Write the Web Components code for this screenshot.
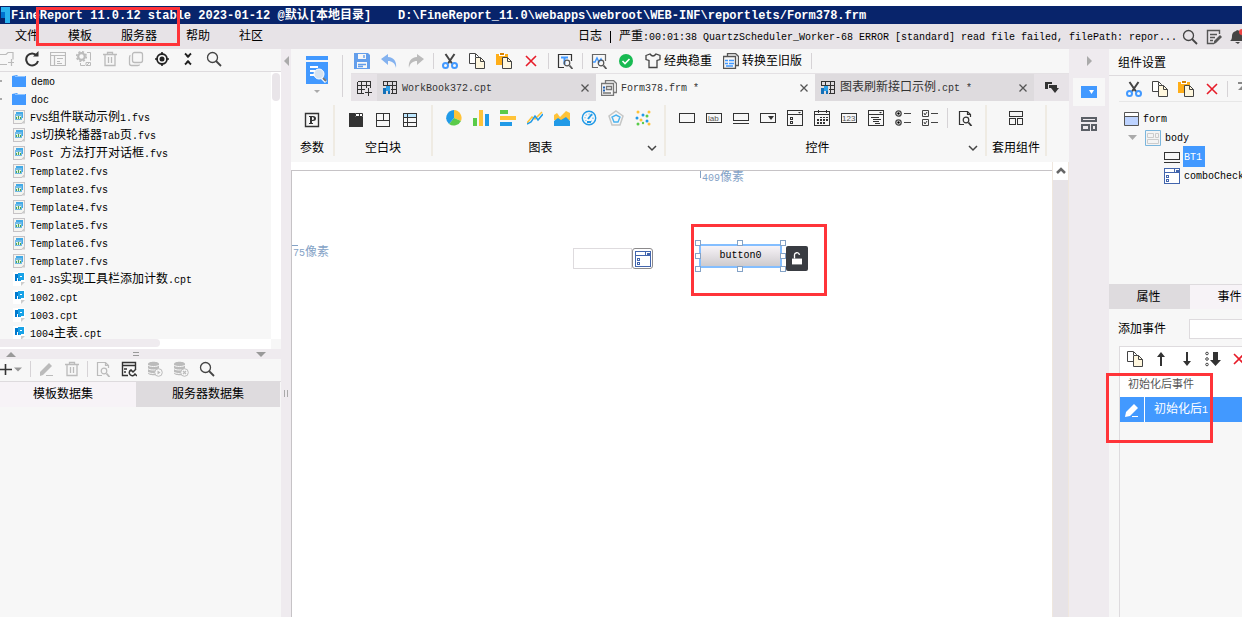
<!DOCTYPE html>
<html lang="zh-CN">
<head>
<meta charset="utf-8">
<title>FineReport</title>
<style>
html,body{margin:0;height:100%;overflow:hidden;background:#fff}
</style>
</head>
<body>
<report-designer></report-designer>
<script>
const BASE = `
*{box-sizing:border-box}
:host{display:block;box-sizing:border-box;font:10px/18px "Liberation Mono","Noto Sans CJK SC",monospace;color:#000;white-space:pre}
.z,span:not(.z)::before{font-size:12px;line-height:18px;font-family:"Noto Sans CJK SC",sans-serif}
span:not(.z)::before{content:""}
button,input{font:inherit;color:inherit;margin:0;padding:0;border:0;background:none;display:block;white-space:pre}
a{color:inherit;text-decoration:none}
svg{display:block;flex:none}
.sep{flex:none;width:1px;background:#d6d3d6}
`;
/* Chinese runs are set larger than the monospaced Latin around them. */
const mix = html => html.replace(/>([^<]+)/g, (m, t) => '>' + t.replace(/[\u4e00-\u9fff]+/g, '<span class="z">$&</span>'))
                        .replace(/>\s*\n\s*/g, '>').replace(/\n\s*</g, '<');
function define(name, css, html) {
  customElements.define(name, class extends HTMLElement {
    constructor() {
      super();
      this.attachShadow({ mode: 'open' });
    }
    connectedCallback() {
      if (this.shadowRoot.firstChild) return;
      const t = document.createElement('template');
      t.innerHTML = '<style>' + BASE + css + '</style>' + mix(typeof html === 'function' ? html(this) : html);
      this.shadowRoot.append(t.content.cloneNode(true));
    }
  });
}

const C = 'shape-rendering="crispEdges"';
const L = (d, c = '#333', w = 1, x = '') => `<path d="${d}" fill="none" stroke="${c}" stroke-width="${w}" ${x}/>`;
const F = (d, c = '#333', x = '') => `<path d="${d}" fill="${c}" ${x}/>`;
const lens = (c, x = 8, y = 9, r = 3.5) => `<circle cx="${x + 2}" cy="${y}" r="${r}" fill="none" stroke="${c}" stroke-width="1.2"/>` + L(`M${x + 4.5} ${y + 2.5}l3 3.5`, c, 1.8);
const dbase = F('M1 3c0-3 11-3 11 0v9c0 3-11 3-11 0z', '#bbb') + L('M1 4c1 2 10 2 11 0M1 7.500c1 2 10 2 11 0M1 11c1 2 10 2 11 0', '#f7f7f7') + '<circle cx="11.500" cy="11.500" r="3.800" fill="#f7f7f7" stroke="#bbb"/>';
const sheet = L('M1.500 1.500h13v12h-13zM1.500 5.500h13M1.500 9.500h13M5.500 1.500v12M10.500 1.500v12', '#333', 1, C);
const ICONS = {
  newfolder: L('M0 3.500h8l2-2h5v7M0 13.500h9M13.500 8v7M10 11.500h7', '#bbb', 1.2),
  refresh: L('M12.800 4.600A6 6 0 1 0 14 10', '#333', 2) + F('M9 5.500h5.500V0z'),
  listbox: L('M.5 1.500h15v13h-15zM.5 4.500h15M4.500 4v10M7 7.500h6M7 10.500h3M7 12.500h5', '#bbb', 1.2),
  gears: '<circle cx="5.500" cy="5.500" r="3.300" fill="none" stroke="#bbb" stroke-width="2.200" /><circle cx="5.500" cy="5.500" r="4.800" fill="none" stroke="#bbb" stroke-width="1.600" stroke-dasharray="2 1.770"/>' + L('M11 1.500h3.500v8M4.500 12v2.500H9M10 11.500h4.500v3H10zM11 14l3-3', '#bbb'),
  trash: L('M1 3.500h14M5.500 3V1.500h5V3M3 4v10.500h10V4M6.500 6v6M9.500 6v6', '#bbb', 1.3),
  layers: '<rect x="4.500" y="1.500" width="10" height="10" rx="2" fill="none" stroke="#bbb" stroke-width="1.300"/>' + L('M2.500 4.500q-1 0-1 2v6q0 2 2 2h6q2 0 2-1', '#bbb', 1.3),
  locate: '<circle cx="8" cy="8" r="5" fill="none" stroke="#222" stroke-width="1.800"/><circle cx="8" cy="8" r="2.500" fill="#222"/>' + L('M8 1v3M8 12v3M1 8h3M12 8h3', '#222', 1.6),
  collapse: L('M5 2.500l3 3 3-3M5 13.500l3-3 3 3', '#222', 1.8) + F('M6 5h4l-2 2zM6 11h4l-2-2z', '#222'),
  search: '<circle cx="6.500" cy="6.500" r="5" fill="none" stroke="#444" stroke-width="1.300"/>' + L('M10 10l5 5', '#444', 1.8),
  folder: F('M1 3l5-1 1 1h8v11H1z', '#4299ff') + L('M4 3.500h10', '#8fc4ff'),
  fvs: `<g ${C}><path d="M1.500 1.500h11v10l-3 3h-8z" fill="#f4f4f0" stroke="#c6c3c6"/><path d="M4 3h7v6h-7z" fill="#42aae7"/><path d="M3 5h7v6H3z" fill="#73bbe8"/><path d="M4 7h5v3H4z" fill="#e7f3de"/><path d="M4 8h1v2H4zM6 7h1v3H6zM8 8h1v2H8z" fill="#52a552"/></g>` + F('M9 14.500l4-4v4z', '#ccc'),
  cpt: `<path d="M1 1h12v10l-4 4H1z" fill="#fff"/><g ${C}><path d="M3 3h4v7H3z" fill="#0079ce"/><path d="M6 2h6v7H9v1H7V8H6z" fill="#18a2e7"/><path d="M5 7h1v3H5zM8 5h2v1H8z" fill="#fff"/></g>` + F('M9 15v-4h4z', '#ccc'),
  plus: L('M0 8.500h12M5.500 3v11', '#333', 1.6) + F('M14 6.500h8l-4 4z', '#999'),
  pencil: F('M2 11L11 2l3 3-9 9-3 1z', '#bbb') + L('M8 14.500h7', '#bbb'),
  pencilw: F('M2 10L10 2l4 4-8 8-5 1z', '#fff') + L('M8 14.500h6', '#fff'),
  docsearch: L('M7 14.500H2.500v-13h8l3 3V7M10.500 1.500v3h3', '#bbb', 1.2) + lens('#bbb', 7, 10, 2.8),
  docsearchd: L('M7 14.500H2.500v-13h8l3 3V7M10.500 1.500v3h3', '#333', 1.2) + lens('#333', 7, 10, 2.8),
  dataedit: L('M14.500 8V1.500h-13v13H7M1.500 4.500h13M3 8h3M3 11h2', '#333', 1.4) + L('M15 8l-3 3-2-2a3 3 0 1 0 4 4l2 2', '#333', 1.5),
  dbplay: dbase + F('M10.500 9.500l3 2-3 2z', '#bbb'),
  dbx: dbase + L('M10 10l3 3M13 10l-3 3', '#bbb', 1.2),
  save: F('M0 0h14l2 2v14H0z', '#639eeb') + F('M4 1h8v5H4zM3 9h10v6H3z', '#f7f7f7') + L('M10 2v3M4 11.500h8M4 13.500h5', '#639eeb', 1.4),
  undo: F('M0 6l7-5v3c6 0 9 5 8 11-1-5-4-7-8-7v4z', '#84b2ef'),
  redo: F('M16 6L9 1v3C3 4 0 9 1 15c1-5 4-7 8-7v4z', '#bbb'),
  cut: L('M3.500 1L10 10.500M12.500 1L6 10.500', '#444', 2) + '<g fill="none" stroke="#4299ff" stroke-width="2"><circle cx="3.500" cy="12.500" r="2.500"/><circle cx="12.500" cy="12.500" r="2.500"/></g>',
  copy: '<path d="M.5 .5h6l3 3v7h-9z" fill="#fff" stroke="#444"/><path d="M6.500 4.500h5l4 4v7h-9z" fill="#fff7de" stroke="#444"/>' + L('M11.500 4.500v4h4M6.500 1v3', '#444'),
  paste: F('M0 1h12v11H0z', '#ffae18') + F('M3 0h6v3H3z', '#fff') + F('M4 0h4v2H4z', '#d98200') + '<path d="M6.500 4.500h5l4 4v7h-9z" fill="#fff7de" stroke="#444"/>' + L('M11.500 4.500v4h4', '#444'),
  remove: L('M3 3l10 10M13 3L3 13', '#e71c29', 1.6),
  tsearch: L('M7 14.500H1.500v-13h13V8', '#333', 1.2) + L('M4 4.500h7M7.500 4.500v7', '#4299ff', 2) + lens('#555', 8, 10, 2.8),
  wave: L('M7 14.500H1.500v-13h13V8', '#666', 1.2) + L('M2 9h2l2-4 2 4 2-3 1 2', '#4299ff', 1.5) + lens('#555', 8, 10, 2.8),
  ok: '<circle cx="8" cy="8" r="7" fill="#18ba52"/>' + L('M4.500 8l2.500 2.500L11.500 6', '#fff', 1.6),
  shirt: L('M1 2.500L5 1q3 4 6 0l4 1.500v4l-3 1v7H4v-7l-3-1z', '#444', 1.3),
  oldver: L('M4.500 3V.5h8l3 3v9H13M.5 3.500h12v12H.5z', '#555', 1.3) + L('M2 7.500h3M6 7.500h5M2 10.500h3M6 10.500h5M3 13h7', '#4299ff', 1.6),
  form: L('M4.500 3V.5h8l3 3v9H13M.5 3.500h12v12H.5zM5.500 6.500h5v3h-5zM2 13h8', '#777', 1.3) + L('M2 7.500h2M2 10.500h2', '#2464b5', 2),
  addsheet: L('M1.500 1.500h13V8M1.500 1.500v12H8M1.500 5.500h13M1.500 9.500h7M5.500 1.500v12M10.500 1.500v6M12.500 8v8M9 12.500h7', '#333', 1, C),
  sheet: sheet + F('M1 6h8v8H1z', '#dedbde', C) + F('M1 8h3v6H1zM6 10h2v4H6z', '#1470b8', C) + F('M4 6h4v5H4z', '#2da0e8', C),
  param: `<path d="M1.500 1.500h13v13h-13z" fill="none" stroke="#333" stroke-width="1.400"/><path fill-rule="evenodd" d="M5 4h4q3 0 3 2.500T9 9H8v2h1v1H5v-1h1V5H5zM8 5v3q2 0 2-1.500T8 5z" fill="#333"/>`,
  tabblock: F('M1 1h6v4h8v10H1z', '#333') + F('M8 1h3v3H8zM12 1h3v3h-3z', '#fff') + L('M7.500 1.500h7v3h-7zM11.500 1v4'),
  absblock: L('M1.500 1.500h13v13h-13zM1.500 8.500h13M8.500 1.500v7', '#333', 1, C),
  report: `<path d="M2 2h12v3H2z" fill="#bde7ff"/>` + L('M1.500 1.500h13v13h-13zM1.500 5.500h13M1.500 10.500h13M5.500 1.500v13', '#333', 1, C),
  pie: F('M8 8V0a8 8 0 0 1 7 11z', '#ffc339') + F('M8 8l7 3A8 8 0 0 1 3 14z', '#5acb4a') + F('M8 8l-5 6A8 8 0 0 1 8 0z', '#219ae7'),
  bars: F('M0 8h4v8H0z', '#5acb4a') + F('M6 0h4v16H6z', '#ffc339') + F('M12 4h4v12h-4z', '#219ae7'),
  hbars: F('M0 0h8v4H0z', '#5acb4a') + F('M0 6h16v4H0z', '#ffc339') + F('M0 12h12v4H0z', '#219ae7'),
  line: L('M0 13l5-6 3 2 7-7', '#ffc339', 1.5) + L('M0 14l4-2 4-6 3 4 5-6', '#219ae7', 1.5),
  area: F('M0 5l3-2 3 4 6-6 4 2v7H0z', '#ffc339') + F('M0 11l4-3 3 2 5-3 4 4v5H0z', '#219ae7'),
  gauge: '<circle cx="8" cy="8" r="6.700" fill="none" stroke="#219ae7" stroke-width="1.400"/><circle cx="8" cy="8" r="4" fill="none" stroke="#219ae7" stroke-dasharray="1 2"/>' + L('M7 9l4-5M6 12h4', '#219ae7', 2),
  radar: L('M8 1l7 5-3 9H4L1 6z', '#c6c7c6', 1.5) + L('M8 5l4 2-2 5H6L4 7z', '#4ab2ef', 1.4),
  scatter: '<g fill="#219ae7"><circle cx="2" cy="8" r="1.500"/><circle cx="8" cy="5" r="1.500"/><circle cx="12" cy="11" r="1.500"/></g><g fill="#ffc339"><circle cx="3" cy="2" r="1.500"/><circle cx="14" cy="2" r="1.500"/><circle cx="6" cy="10" r="1.500"/><circle cx="14" cy="14" r="1.500"/></g><g fill="#5acb4a"><circle cx="3" cy="14" r="1.500"/><circle cx="12" cy="6" r="1.500"/><circle cx="8" cy="13" r="1.200"/></g>',
  textbox: L('M.5 3.500h15v9H.5z', '#333', 1, C),
  label: L('M.5 3.500h15v9H.5z', '#333', 1, C) + '<text x="2" y="11" font-family="Liberation Sans" font-size="8" fill="#555">lab</text>',
  btn: L('M.5 3.500h15v7H.5zM0 13.500h16', '#333', 1, C),
  combo: L('M.5 3.500h15v9H.5z', '#333', 1, C) + F('M8 6h6l-3 4z'),
  combocheck: L('M.5 .5h15v15H.5zM.5 4.500h15M3.500 7.500h2v2h-2zM3.500 11.500h2v2h-2z', '#333', 1, C) + F('M11 2h3l-1.500 1.500z'),
  combob: '<path d="M.5 .5h15v15H.5z" fill="#fff"/>' + L('M.5 .5h15v15H.5zM.5 4.500h15M10.500 .5v4M2.500 7.500h2v2h-2zM2.500 11.500h2v2h-2z', '#4265ad', 1, C) + F('M12 2h3v2h-3z', '#4265ad'),
  calendar: L('M.5 1.500h15v14H.5zM.5 4.500h15M4 0v3M12 0v3', '#333', 1, C) + F('M6 7h2v1H6zM9 7h2v1H9zM12 7h2v1h-2zM3 9h2v2H3zM6 9h2v2H6zM9 9h2v2H9zM12 9h2v2h-2zM3 12h2v2H3zM6 12h2v2H6zM9 12h2v2H9z', '#333', C),
  number: L('M.5 3.500h15v9H.5z', '#333', 1, C) + '<text x="1" y="11" font-family="Liberation Sans" font-size="8" fill="#555">123</text>',
  textarea: L('M.5 .5h15v15H.5zM.5 4.500h15M3 7.500h8M5 9.500h8M5 11.500h6M7 13.500h5', '#333', 1, C) + F('M11 2h3l-1.500 1.500z'),
  radios: '<g fill="none" stroke="#444" stroke-width="1.300"><circle cx="3.500" cy="3.500" r="2.700"/><circle cx="3.500" cy="12.500" r="2.700"/></g><circle cx="3.500" cy="3.500" r="1.200"/><circle cx="3.500" cy="12.500" r="1.200"/>' + L('M9 3.500h7M9 12.500h7', '#444'),
  checks: L('M.5 .5h6v6h-6zM.5 9.500h6v6h-6zM9 3.500h7M9 12.500h7', '#444') + L('M2 3l1 2 2-3M2 12l1 2 2-3', '#444'),
  blocks: L('M1.500 1.500h13v5h-13zM1.500 8.500h6v6h-6zM9.500 8.500h5v6h-5z', '#333', 1, C),
  blocksb: L('M1 2h14v3H1zM1 9h7v5H1zM11 9h4v5h-4z', '#5b5f66', 2, C),
  chev: L('M4 6l4 4 4-4', '#444', 1.5),
  chevup: L('M4 10l4-4 4 4', '#666', 2.5),
  close: L('M4.500 4.500l7 7M11.500 4.500l-7 7', '#555', 1.3),
  tablist: F('M1 2h7v2H4v5H1z') + F('M5 5h8v3h2l-4 5-4-5H5z'),
  noteedit: L('M13.500 5V1.500h-12v13H8M4 5.500h7M4 8.500h5M4 11.500h3', '#555', 1.4) + F('M8 12l6-6 2 2-6 6-2 1z', '#555'),
  bell: F('M0 12q2-1 2-5 0-4 4-5l1-1q5 1 5 6 0 4 2 5zM5 13h5l-2 2z', '#444') + '<circle cx="12" cy="3" r="3" fill="#e44"/>',
  window: '<path d="M1.500 1.500h14v13h-14z" fill="#bdd3ff" stroke="#555"/><path d="M2 2h13v3H2z" fill="#fff"/>' + L('M1 5.500h15', '#555'),
  body: '<path d="M.5 .5h15v15H.5z" fill="#f4f4f4" stroke="#7bb6dd"/>' + L('M2.500 3.500h6v4h-6zM10.500 3.500h3v4h-3zM2.500 9.500h11v4h-11z', '#ccc'),
  comp: F('M0 2h16v12H0z', '#4299ff') + F('M8 6h5l-2.500 4z', '#fff'),
  up: F('M7 15V6H4l4-5 4 5H9v9z'),
  down: F('M7 1v9H4l4 5 4-5H9V1z'),
  bottom: F('M8 1h5v8h3l-5.500 6L5 9h3z') + '<g fill="none" stroke="#444"><circle cx="2" cy="2.500" r="1.300"/><circle cx="2" cy="8" r="1.300"/><circle cx="2" cy="13.500" r="1.300"/></g>',
  top: L('M3 2h12', '#888', 2) + F('M3 9l5-5 5 5z', '#888'),
  lock: F('M2 8h12v7H2z', '#fff') + L('M5 8V4.500a3 3 0 0 1 6-1', '#fff', 1.6)
};
const svg = (n, w = 16) => `<svg width="${w}" height="16" viewBox="0 0 ${w} 16" aria-hidden="true">${ICONS[n]}</svg>`;

define('ui-icon', ':host{flex:none}', el => svg(el.getAttribute('name'), +el.getAttribute('w') || 16));
define('icon-button', ':host{flex:none}', el => `<button type="button" aria-label="${el.getAttribute('name')}">${svg(el.getAttribute('name'), +el.getAttribute('w') || 16)}</button>`);
const ib = s => s.split(' ').map(n => n === '|' ? '<i class="sep"></i>' : `<icon-button name="${n}"></icon-button>`).join('');

define('title-bar', `:host{background:#08246b;color:#fff;height:18px;display:flex;align-items:center;gap:27px;font-weight:bold;font-size:12px;overflow:hidden}
span.a{display:flex;align-items:center;gap:1px}`,
`<span class="a"><svg width="9" height="18"><path d="M0 1h9v16H4V6H0z" fill="#29b2ef"/><path d="M0 6h4v6H0z" fill="#0071ce"/></svg><span>FineReport 11.0.12 stable 2023-01-12 @默认[本地目录]</span></span><span>D:\\FineReport_11.0\\webapps\\webroot\\WEB-INF\\reportlets/Form378.frm</span>`);

define('menu-bar', `:host{background:#e7e3e7;height:25px;display:flex;align-items:center;padding-left:15px;overflow:hidden}
nav{display:flex;gap:29px}
.log{margin-left:auto;display:flex;align-items:center;gap:5px}
.log .sep{height:12px;margin:0 8px;background:#000}.msg{display:flex;align-items:center}
.ic{display:flex;gap:8px}.clip{width:12px;overflow:hidden}`,
`<nav><a href="#file">文件</a><a href="#tpl">模板</a><a href="#server">服务器</a><a href="#help">帮助</a><a href="#bbs">社区</a></nav>
<div class="log"><div class="msg"><a href="#log">日志</a><i class="sep"></i><span>严重:00:01:38 QuartzScheduler_Worker-68 ERROR [standard] read file failed, filePath: repor...</span></div><div class="ic"><icon-button name="search"></icon-button><icon-button name="noteedit"></icon-button><div class="clip"><icon-button name="bell"></icon-button></div></div></div>`);

define('tree-row', `:host{display:flex;align-items:center;height:18px;padding-left:11px;gap:4px}
:host([kind=fvs]),:host([kind=cpt]){padding-left:12px;gap:2px}
:host([kind=folder])::before{content:"";position:absolute;left:0;width:2px;height:2px;background:#aaa}`,
el => svg(el.getAttribute('kind')) + '<span><slot></slot></span>');

define('file-panel', `:host{flex:none;width:281px;display:flex;flex-direction:column;background:#f7f7f7}
.bar{display:flex;align-items:center;gap:10px;height:23px;padding-bottom:2px;border-bottom:1px solid #dedbde;overflow:hidden}
.bar>:first-child{margin-left:-2px}
.tree{display:flex;height:267px}
.rows{flex:1;overflow:hidden;position:relative}
.vs{width:10px;background:#fff;padding:1px}
.vs i{display:block;height:28px;border-radius:4px;background:#e9e5e9}
.hs{height:10px;background:#fff;margin-right:10px}
.hs i{display:block;width:160px;height:8px;background:#efebef;border-radius:0 4px 4px 0}
.split{height:10px;background:#efebef;display:flex;align-items:center;justify-content:space-between;padding:0 15px 0 6px}
.ds{gap:10px}.ds>:first-child{margin-left:0}
.ds .sep{height:16px;margin:0 -3px}
.tabs{display:flex;margin-right:1px;height:25px}
.tabs button{width:136px;background:#f7f3f7;padding-right:10px}
.tabs button+button{background:#dedbde;flex:1;padding:0}`,
`<div class="bar">${ib('newfolder refresh listbox gears trash layers locate collapse search')}</div>
<div class="tree"><div class="rows">
<tree-row kind="folder">demo</tree-row><tree-row kind="folder">doc</tree-row>
<tree-row kind="fvs">FVS组件联动示例1.fvs</tree-row><tree-row kind="fvs">JS切换轮播器Tab页.fvs</tree-row><tree-row kind="fvs">Post 方法打开对话框.fvs</tree-row>
${[2,3,4,5,6,7].map(n => `<tree-row kind="fvs">Template${n}.fvs</tree-row>`).join('')}
<tree-row kind="cpt">01-JS实现工具栏添加计数.cpt</tree-row><tree-row kind="cpt">1002.cpt</tree-row><tree-row kind="cpt">1003.cpt</tree-row><tree-row kind="cpt">1004主表.cpt</tree-row>
</div><div class="vs"><i></i></div></div>
<div class="hs"><i></i></div>
<div class="split"><svg width="10" height="5"><path d="M0 5l5-5 5 5z" fill="#999"/></svg><svg width="6" height="4"><path d="M0 .5h6M0 3.500h6" stroke="#999"/></svg><svg width="10" height="5"><path d="M0 0h10L5 5z" fill="#999"/></svg></div>
<div class="bar ds"><icon-button name="plus" w="23"></icon-button>${ib('| pencil trash | docsearch dataedit dbplay dbx search')}</div>
<div class="tabs"><button type="button">模板数据集</button><button type="button">服务器数据集</button></div>`);

define('doc-tab', `:host{display:flex;align-items:center;width:219px;padding:0 3px 0 5px;gap:4px;background:#dedbde;color:#333}
:host([active]){background:#f7f7f7}
span.t{flex:1}`,
el => `${svg(el.getAttribute('icon'))}<span class="t"><slot></slot></span><icon-button name="close"></icon-button>`);

define('tool-group', `:host{flex:none;height:51px;border-right:2px solid #efebe3;display:flex;flex-direction:column;justify-content:space-between;position:relative}
.i{display:flex;gap:11px;justify-content:center;height:26px;align-items:center}
.l{text-align:center;height:18px}
:host([more]) .l{padding-right:16px}
:host([low]) .i{padding-top:4px}
.more{position:absolute;right:4px;bottom:0}`,
el => `<div class="i"><slot name="i"></slot></div><div class="l"><slot></slot></div>${el.hasAttribute('more') ? '<div class="more"><icon-button name="chev"></icon-button></div>' : ''}`);

const gi = s => s.split(' ').map(n => n === '|' ? '<i slot="i" class="sep gs"></i>' : `<icon-button slot="i" name="${n}"></icon-button>`).join('');
define('design-ribbon', `:host{background:#f7f7f7;height:113px;display:flex;flex-direction:column;overflow:hidden}
.top{display:flex;height:52px}
.tpl{width:51px;display:flex;flex-direction:column;align-items:center;padding-top:7px;gap:6px;border:0}
.rule{height:42px;margin-top:6px}
.right{flex:1;padding-left:8px;display:flex;flex-direction:column}
.tools{display:flex;align-items:center;gap:11px;height:24px;padding-left:3px}
.tools>.sep{height:16px;margin:0 -3px 0 -2px}
.tb{display:flex;align-items:center;gap:3px}
.docs{display:flex;height:28px;border-top:1px solid #e4e1e4;background:#e7e3e7}
.add{width:26px;display:flex;align-items:center;justify-content:center}
.menu{flex:1;display:flex;align-items:center;justify-content:center}
.groups{display:flex;padding-top:4px}
.gs{height:20px;margin:0 -2px}
.g1{width:44px}.g2{width:98px}.g3{width:233px}.g4{width:321px}.g5{width:60px}`,
`<div class="top"><button type="button" class="tpl" aria-label="模板"><svg width="22" height="28"><path d="M0 0h22v4H0zM0 6h22v22H0z" fill="#4299ff"/><path d="M4 11h8M4 15h5M4 19h5" stroke="#fff" stroke-width="2"/><circle cx="13" cy="18" r="5" fill="#d6e3f0" stroke="#fff"/><path d="M16 22l4 4" stroke="#fff" stroke-width="3"/><path d="M17 22l3 3" stroke="#777" stroke-width="2"/></svg><svg width="6" height="3"><path d="M0 0h6L3 3z" fill="#aaa"/></svg></button><i class="sep rule"></i>
<div class="right"><div class="tools">${ib('save undo redo | cut copy paste remove | tsearch | wave ok')}<button type="button"><div class="tb"><ui-icon name="shirt"></ui-icon><span>经典稳重</span></div></button><button type="button"><div class="tb"><ui-icon name="oldver"></ui-icon><span>转换至旧版</span></div></button><i class="sep"></i></div>
<div class="docs"><div class="add"><icon-button name="addsheet"></icon-button></div><doc-tab icon="sheet">WorkBook372.cpt</doc-tab><doc-tab icon="form" active>Form378.frm *</doc-tab><doc-tab icon="sheet">图表刷新接口示例.cpt *</doc-tab><div class="menu"><icon-button name="tablist"></icon-button></div></div></div></div>
<div class="groups"><tool-group class="g1" low>${gi('param')}参数</tool-group><tool-group class="g2" low>${gi('tabblock absblock report')}空白块</tool-group><tool-group class="g3" more>${gi('pie bars hbars line area gauge radar scatter')}图表</tool-group><tool-group class="g4" more>${gi('textbox label btn combo combocheck calendar number textarea radios checks | docsearchd')}控件</tool-group><tool-group class="g5">${gi('blocks')}套用组件</tool-group></div>`);

/* Widgets on the form canvas sit at free positions measured from the canvas corner. */
define('form-canvas', `:host{flex:1;display:flex;min-height:0;background:#fff}
.sheet{flex:1;margin-top:8px;border-top:1px solid #c6c3c6;border-left:1px solid #c6c3c6;position:relative}
.sheet>*{position:absolute}
.px{color:#84a2c6}
.h{left:410px;top:-4px}.tick{background:#84a2c6}
.th{left:408px;top:0;width:1px;height:7px}
.v{left:1px;top:71px}.tv{left:0;top:74px;width:6px;height:1px}
.combo{left:281px;top:77px;display:flex}
.combo input{width:59px;height:21px;border:1px solid #dedbde;background:#fff}
.combo button{width:21px;height:21px;border:1px solid #8c8a8c;border-radius:3px;display:grid;place-items:center}
.btn{left:407px;top:73px;width:83px;height:24px;border:2px solid #84beff;background:linear-gradient(#f7f3f7,#cecbce);line-height:18px}
.hd{left:403px;top:69px}
.lock{left:494px;top:75px;width:22px;height:25px;border-radius:2px;background:#393c42;display:grid;place-items:center}
.mark{left:399px;top:53px;width:136px;height:72px;border:3px solid #ff3439}
.sb{width:17px;background:#e7e3e7;border-left:1px solid #efe7de;border-right:1px solid #efe7de}
.sb div{height:18px;background:#fff;display:grid;place-items:center}`,
`<div class="sheet"><i class="tick th"></i><i class="tick tv"></i><span class="px h">409像素</span><span class="px v">75像素</span>
<div class="combo"><input type="text" aria-label="comboCheckBox"><button type="button" aria-label="open">${svg('combob')}</button></div>
<button type="button" class="btn">button0</button>
<svg class="hd" width="91" height="33"><g fill="#fff" stroke="#84a2c6" ${C}>${[[0,0],[42,0],[85,0],[0,13],[85,13],[0,26],[42,26],[85,26]].map(([x,y]) => `<path d="M${x + .5} ${y + .5}h5v5h-5z"/>`).join('')}</g></svg>
<button type="button" class="lock" aria-label="lock"><svg width="10" height="14" viewBox="2 1 12 15">${ICONS.lock}</svg></button><div class="mark"></div></div>
<div class="sb"><div>${svg('chevup')}</div></div>`);

define('side-strip', `:host{flex:none;width:40px;background:#efebef;display:flex;flex-direction:column;align-items:center;padding-top:7px}
.s{width:32px;height:28px;background:#f7f7f7;display:grid;place-items:center;margin:12px 0 10px}`,
`<svg width="5" height="10"><path d="M0 0v10l5-5z" fill="#aaa"/></svg><div class="s"><icon-button name="comp"></icon-button></div><icon-button name="blocksb"></icon-button>`);

define('node-row', `:host{display:flex;align-items:center;height:19px;gap:4px}
:host([sel]) span.t{background:#4299ff;color:#fff;padding:0 3px 0 1px}
:host([sel]){gap:3px}`, el => svg(el.getAttribute('icon')) + '<span class="t"><slot></slot></span>');

define('widget-panel', `:host{flex:none;width:133px;background:#f7f7f7;overflow:hidden;display:flex;flex-direction:column}
h2{margin:0;font:inherit;height:27px;padding:4px 9px 0;border-bottom:1px solid #dedbde}
.tools{display:flex;align-items:center;gap:10px;height:26px;margin-left:10px;padding-left:7px;border-bottom:1px solid #e7e7e7}
.tools .sep{height:16px;margin:0 -3px}
.tree{height:182px;padding-top:7px}
.n1{padding-left:14px}.n2{padding-left:19px}.n3{padding-left:55px}
.n2{display:flex;align-items:center;gap:8px}
.tabs{display:flex;border-top:1px solid #dedbde;height:25px}
.tabs button{flex:none;width:81px;background:#dedbde;padding-right:2px}.tabs button+button{background:#f7f3f7}
.add{display:flex;align-items:center;gap:23px;padding-left:9px;margin-top:10px;height:20px}
.add input{width:120px;height:20px;border:1px solid #dedbde;background:#fff}
.list{flex:1;margin:7px 0 0 10px;border:1px solid #dedbde;border-width:1px 0 0 1px;position:relative}
.white{background:#fff;height:50px}
.lt{display:flex;gap:10px;padding:4px 0 0 7px;height:27px}
.hdr{padding-left:8px;color:#555}.hdr .z{font-size:11px}
.row{height:25px;background:#4299ff;color:#fff;display:flex;align-items:center}
.row div{width:25px;height:25px;border-right:1px solid #fff;display:grid;place-items:center;margin-right:9px}`,
`<h2>组件设置</h2><div class="tools">${ib('cut copy paste remove | top')}</div>
<div class="tree"><node-row class="n1" icon="window">form</node-row><div class="n2"><svg width="9" height="5"><path d="M0 0h9L4.500 5z" fill="#aaa"/></svg><node-row icon="body">body</node-row></div><node-row class="n3" icon="btn" sel>BT1</node-row><node-row class="n3" icon="combob">comboCheck</node-row></div>
<div class="tabs"><button type="button">属性</button><button type="button">事件</button></div>
<div class="add"><label for="ev">添加事件</label><input id="ev" type="text"></div>
<div class="list"><div class="white"><div class="lt">${ib('copy up down bottom remove')}</div><div class="hdr">初始化后事件</div></div><div class="row"><div>${svg('pencilw')}</div><span>初始化后1</span></div></div>`);

define('report-designer', `:host{height:100vh;padding-top:6px;display:flex;flex-direction:column;background:#fff;position:relative;overflow:hidden}
main{flex:1;display:flex;min-height:0}
.gut{flex:none;width:10px;background:#efebef;display:flex;flex-direction:column;align-items:center;padding-top:7px}
.gut svg+svg{margin-top:324px}
.mid{flex:1;min-width:0;display:flex;flex-direction:column}
.mark{position:absolute;border:3px solid #ff3439;pointer-events:none}
.m1{left:36px;top:7px;width:144px;height:39px}
.m2{right:29px;top:373px;width:107px;height:70px}`,
`<title-bar></title-bar><menu-bar></menu-bar><main><file-panel></file-panel><div class="gut"><svg width="5" height="10"><path d="M5 0v10L0 5z" fill="#aaa"/></svg><svg width="4" height="7"><path d="M.5 0v7M3.500 0v7" stroke="#aaa"/></svg></div><div class="mid"><design-ribbon></design-ribbon><form-canvas></form-canvas></div><side-strip></side-strip><widget-panel></widget-panel></main><div class="mark m1"></div><div class="mark m2"></div>`);
</script>
</body>
</html>
